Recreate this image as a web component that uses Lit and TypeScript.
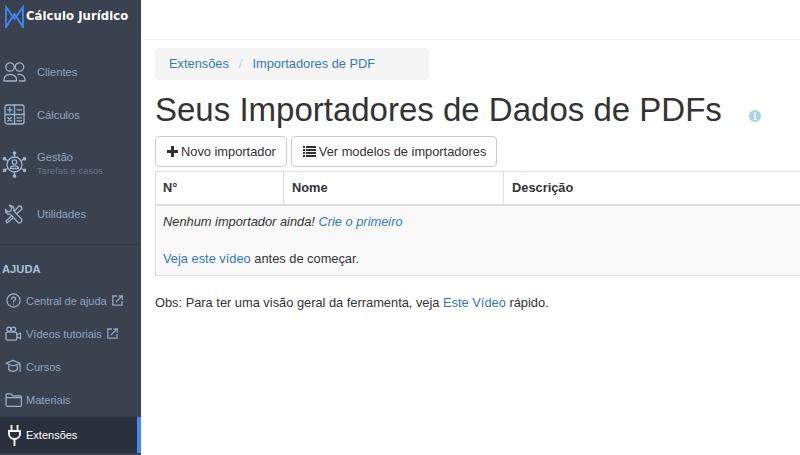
import { LitElement, html, css, svg } from "lit";
import { customElement } from "lit/decorators.js";

const ic = (w: number, h: number, vb: string, body: unknown) => html`<svg width=${w} height=${h} viewBox=${vb} fill="none" stroke="currentColor" stroke-width="1.3" stroke-linecap="round" stroke-linejoin="round">${body}</svg>`;

const ext = html`<svg class="ext" width="11" height="11" viewBox="0 0 11 11" fill="none" stroke="currentColor" stroke-width="1.3"><path d="M5 1H.8v9.200H10V6"/><path d="M4 7L9.500 1.500M6.500 1h4v4" /></svg>`;

@customElement("app-root")
export class AppRoot extends LitElement {
  static styles = css`
    :host { display: flex; width: 800px; height: 455px; overflow: hidden; background: #fff; font-family: "Liberation Sans", Arial, sans-serif; font-size: 12.83px; line-height: 18px; color: #333; }
    a { color: #337ab7; text-decoration: none; }
    .side { width: 141px; flex: none; background: #3a424f; color: #8fa6c0; display: flex; flex-direction: column; }
    .brand { height: 32px; display: flex; align-items: center; gap: 2px; padding-left: 5px; color: #fff; font-family: "DejaVu Sans", sans-serif; font-weight: 700; font-size: 11.6px; letter-spacing: .1px; }
    .big { display: flex; flex-direction: column; padding-top: 18px; }
    .item { display: flex; align-items: center; font-size: 11.2px; line-height: 14px; height: 43px; }
    .item .ico { width: 37px; box-sizing: border-box; padding-right: 9px; flex: none; display: flex; justify-content: center; color: #9db1c9; }
    .item.tall { height: 56px; }
    .col { display: flex; flex-direction: column; }
    .sub { font-size: 9px; line-height: 13px; margin-top: 1px; color: #66758a; letter-spacing: .2px; }
    .sep { height: 1px; background: #323944; margin-top: 9px; }
    .head { font-size: 11.2px; font-weight: 700; line-height: 14px; color: #a9c0dc; padding: 17px 0 0 2px; margin-bottom: 8px; }
    .small { display: flex; align-items: center; height: 33px; font-size: 11px; color: #8fa6c0; }
    .small .ico { width: 26px; flex: none; display: flex; justify-content: center; color: #9db1c9; }
    .ext { margin-left: 5px; }
    .active { background: #2b313c; color: #fff; border-right: 4px solid #3f87f5; height: 36px; margin-top: 1px; }
    .active .ico { color: #fff; padding-left: 3px; box-sizing: border-box; }
    main { flex: 1; min-width: 0; display: flex; flex-direction: column; }
    .top { height: 39px; flex: none; border-bottom: 1px solid #f0f0f0; }
    .content { padding: 8px 0 0 14px; display: flex; flex-direction: column; align-items: flex-start; }
    .crumb { width: 260px; height: 32px; padding-left: 14px; background: #f5f5f5; border-radius: 4px; display: flex; align-items: center; }
    .crumb i { font-style: normal; color: #ccc; margin: 0 10px; }
    .title { display: flex; align-items: baseline; margin-top: 12px; height: 38px; }
    h1 { margin: 0; font-weight: 500; font-size: 33px; line-height: 36px; color: #333; }
    .info { margin-left: 27px; position: relative; top: 1px; color: #a9d4e8; }
    .btns { display: flex; gap: 4px; margin-top: 6px; }
    .btn { height: 31px; box-sizing: border-box; padding: 0 10px 0 11px; border: 1px solid #ccc; border-radius: 4px; display: flex; align-items: center; gap: 3px; color: #333; background: #fff; }
    .table { width: 645px; margin-top: 4px; border: 1px solid #ddd; border-right: 0; }
    .tr { display: grid; grid-template-columns: 128px 220px 1fr; height: 32px; border-bottom: 2px solid #ddd; font-weight: 700; }
    .tr div { display: flex; align-items: center; padding-left: 8px; border-right: 1px solid #ddd; }
    .tr div:first-child { padding-left: 7px; }
    .tr div:last-child { border-right: 0; }
    .empty { background: #f9f9f9; padding: 7px 7px 0; height: 62px; }
    .empty p { margin: 0 0 19px; }
    .empty em { color: #333; }
    .note { margin-top: 18px; }
  `;

  render() {
    return html`
      <nav class="side">
        <div class="brand">
          <svg width="19" height="23" viewBox="0 0 19 23" fill="none" stroke="#3f87f5" stroke-width="1.800"><path d="M1 22V2l8.500 12L18 2v20L9.500 9 1 22z"/></svg>
          <span>Cálculo Jurídico</span>
        </div>
        <div class="big">
          <div class="item"><span class="ico">${ic(23, 20, "0 0 23 20", svg`<circle cx="7" cy="5" r="4.200"/><circle cx="16.500" cy="5" r="4.200"/><path d="M1 19c-.5-4.500 2.500-6.500 6-6.500s7 1.500 6.500 6.500zM15 12.500c4-.5 7.500 1.500 7 6.500h-5.500"/>`)}</span>Clientes</div>
          <div class="item"><span class="ico">${ic(21, 21, "0 0 21 21", svg`<rect x="1" y="1" width="19" height="19" rx="2"/><path d="M10.500 1v19M1 10.500h19M3.500 5.800h4.500M5.800 3.500v4.500M13 5.800h4.500M3.800 13.500l3.500 3.500M7.300 13.500l-3.500 3.500M13 13.800h4.500M13 16.800h4.500"/>`)}</span>Cálculos</div>
          <div class="item tall"><span class="ico">${ic(25, 27, "0 0 25 27", svg`<circle cx="12.500" cy="13.500" r="7.500"/><circle cx="12.500" cy="11" r="2.200"/><path d="M8.500 17.500c0-3.500 8-3.500 8 0zM12.500 6V3M12.500 21v3M6 9.700L3.500 8.200M19 9.700l2.500-1.500M6 17.300l-2.500 1.500M19 17.300l2.500 1.500"/><g fill="currentColor"><circle cx="12.500" cy="2" r="1.200"/><circle cx="12.500" cy="25" r="1.200"/><circle cx="2.500" cy="7.700" r="1.200"/><circle cx="22.500" cy="7.700" r="1.200"/><circle cx="2.500" cy="19.300" r="1.200"/><circle cx="22.500" cy="19.300" r="1.200"/></g>`)}</span>
            <span class="col"><span>Gestão</span><span class="sub">Tarefas e casos</span></span></div>
          <div class="item"><span class="ico">${ic(20, 20, "0 0 20 20", svg`<path d="M5.500 1.500L8 4 6.800 6.800 4 8 1.500 5.500c-.5 3 2 5.500 5 4.700l7.500 8.300c2 1.500 5-1.500 3.500-3.500L9.800 7c1-3-1.500-6-4.300-5.500zM11 6.500l4-4.500 2.500.5.500 2.500-4.500 4M7.500 12l-5.500 5 1 2 5.500-4.500"/>`)}</span>Utilidades</div>
        </div>
        <div class="sep"></div>
        <div class="head">AJUDA</div>
        <div class="small"><span class="ico">${ic(15, 15, "0 0 16 16", svg`<circle cx="8" cy="8" r="7"/><path d="M6 6.300c0-2.600 4.200-2.600 4.200 0 0 1.500-2.200 1.500-2.200 3.200M8 11.800v.1"/>`)}</span>Central de ajuda${ext}</div>
        <div class="small"><span class="ico">${ic(17, 15, "0 0 18 16", svg`<rect x="1" y="6.500" width="11.500" height="8.500" rx="1.500"/><circle cx="4" cy="3.500" r="2.300"/><circle cx="9" cy="3.500" r="2.300"/><path d="M12.500 9.500l4-2v6l-4-2"/>`)}</span>Vídeos tutoriais${ext}</div>
        <div class="small"><span class="ico">${ic(17, 15, "0 0 18 16", svg`<path d="M1 4.500L8.500 1.500l7.500 3-7.500 3zM4 6.500v5c2 2 7 2 9 0v-5M16 5v8"/>`)}</span>Cursos</div>
        <div class="small"><span class="ico">${ic(17, 14, "0 0 18 15", svg`<path d="M1 13V2.500C1 1.500 1.500 1 2.500 1h4l1.500 2h8c1 0 1.500.5 1.500 1.500V13c0 .8-.5 1.300-1.500 1.300h-13C1.500 14.300 1 13.800 1 13zM1 5h16"/>`)}</span>Materiais</div>
        <div class="small active"><span class="ico"><svg width="13" height="23" viewBox="0 0 13 23" fill="none" stroke="currentColor" stroke-width="1.800"><path d="M3.500 1v6M9.500 1v6M1 7h11v3c0 3-2.500 5-5.500 5S1 13 1 10zM6.500 15v7"/></svg></span>Extensões</div>
      </nav>
      <main>
        <div class="top"></div>
        <div class="content">
          <div class="crumb"><a>Extensões</a><i>/</i><a>Importadores de PDF</a></div>
          <div class="title"><h1>Seus Importadores de Dados de PDFs</h1>
            <svg class="info" width="12" height="12" viewBox="0 0 12 12"><circle cx="6" cy="6" r="6" fill="currentColor"/><rect x="5" y="2" width="2" height="2" fill="#fff"/><path d="M4.500 5H7v4h1v1H4.500V9h1V6h-1z" fill="#fff"/></svg>
          </div>
          <div class="btns">
            <div class="btn"><svg width="11" height="11" viewBox="0 0 11 11" fill="#333"><path d="M4 0h3v4h4v3H7v4H4V7H0V4h4z"/></svg>Novo importador</div>
            <div class="btn"><svg width="13" height="11" viewBox="0 0 13 11" fill="#333"><path d="M0 0h2v2H0zM3 0h10v2H3zM0 3h2v2H0zM3 3h10v2H3zM0 6h2v2H0zM3 6h10v2H3zM0 9h2v2H0zM3 9h10v2H3z"/></svg>Ver modelos de importadores</div>
          </div>
          <div class="table">
            <div class="tr"><div>N°</div><div>Nome</div><div>Descrição</div></div>
            <div class="empty"><p><em>Nenhum importador ainda! <a>Crie o primeiro</a></em></p><p><a>Veja este vídeo</a> antes de começar.</p></div>
          </div>
          <div class="note">Obs: Para ter uma visão geral da ferramenta, veja <a>Este Vídeo</a> rápido.</div>
        </div>
      </main>`;
  }
}
